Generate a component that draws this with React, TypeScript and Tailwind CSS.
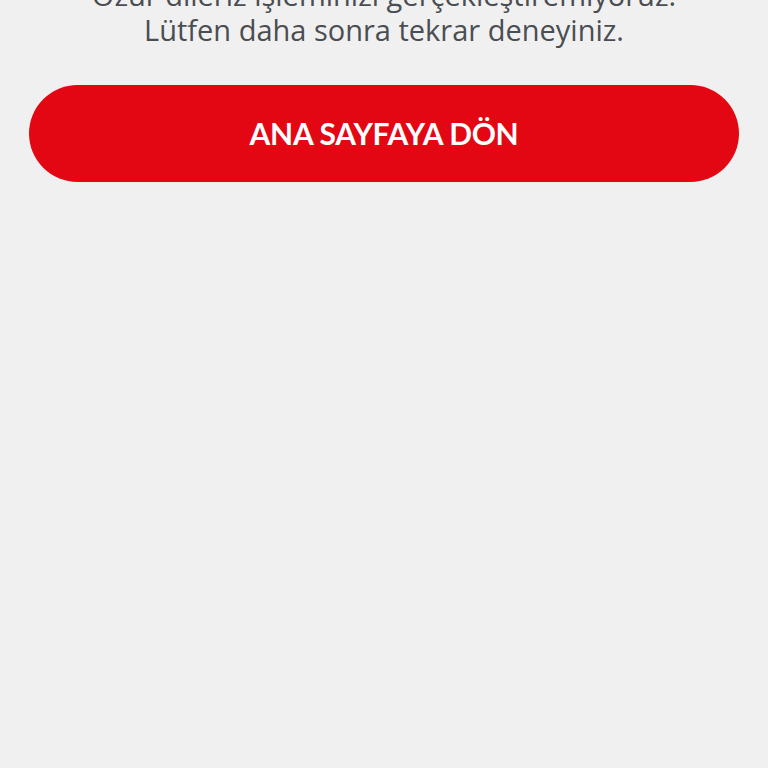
export default function App() {
  return (
    <div className="min-h-[768px] w-full overflow-hidden bg-[#f0f0f0]">
      <div className="mx-auto flex w-full flex-col px-[29px]">
        <p className="-mt-[23px] text-center font-['Open_Sans',sans-serif] text-[29px] leading-[35px] text-[#4a4d52]">
          Özür dileriz işleminizi gerçekleştiremiyoruz.
          <br />
          Lütfen daha sonra tekrar deneyiniz.
        </p>
        <button className="mt-[38px] h-[97px] w-full rounded-full bg-[#e30613] font-['Lato',sans-serif] text-[30px] font-bold tracking-[-0.01em] text-white">
          ANA SAYFAYA DÖN
        </button>
      </div>
    </div>
  );
}
